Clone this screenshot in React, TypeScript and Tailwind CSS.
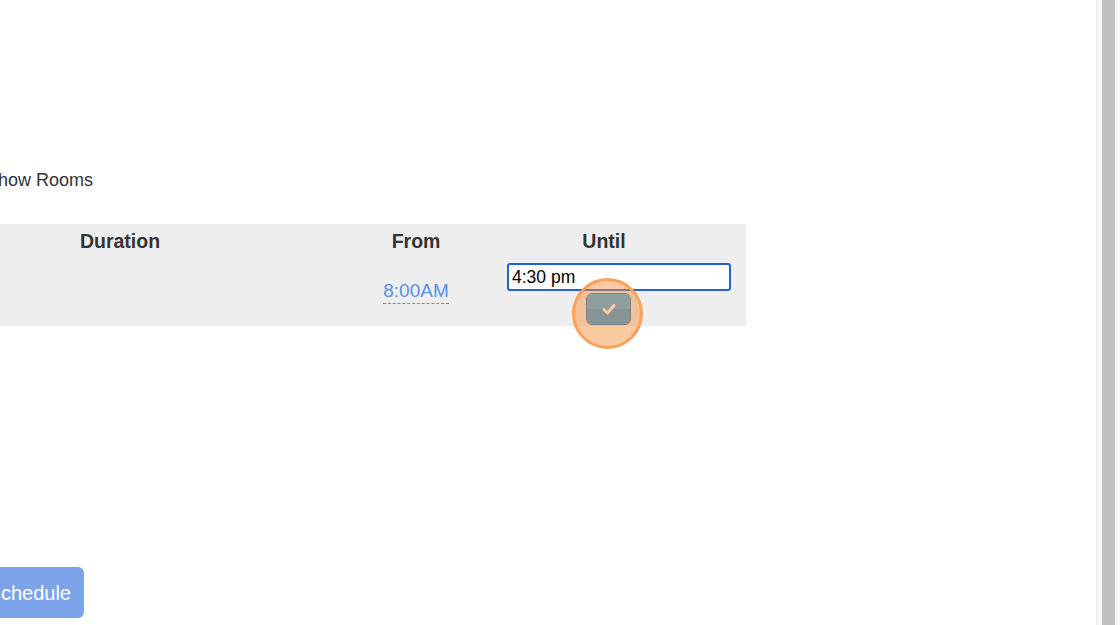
import React from 'react';

const font = { fontFamily: '"Liberation Sans", Arial, sans-serif' };

const App: React.FC = () => {
  return (
    <div className="flex h-[625px] w-[1120px] overflow-hidden bg-white" style={font}>
      <div className="relative flex w-[1096px] flex-col overflow-hidden">
        {/* checkbox label, clipped on the left */}
        <div className="mt-[168px] h-[24px] text-[18px] leading-[24px] text-[#333] -ml-[14px] whitespace-nowrap">
          Show Rooms
        </div>

        <div className="mt-[32px] w-[746px] bg-[#eeeeee] text-[#333]">
          <div className="flex h-[36px] items-center text-[19.5px] font-bold">
            <div className="w-[240px] text-center">Duration</div>
            <div className="w-[110px]" />
            <div className="w-[132px] text-center">From</div>
            <div className="w-[244px] text-center">Until</div>
          </div>
          <div className="flex h-[66px]">
            <div className="w-[350px]" />
            <div className="flex w-[132px] justify-center pt-[20px]">
              <span className="h-[24px] border-b border-dashed border-[#5b8ee6] text-[19px] leading-[22px] text-[#5b8ee6]">
                8:00AM
              </span>
            </div>
            <div className="flex flex-col pl-[25px] pt-[3px]">
              <div className="flex h-[28px] w-[224px] items-center rounded-[3px] border-2 border-[#1e63cf] bg-white px-[3px] text-[17.5px] text-black">
                4:30 pm
              </div>
              <div className="relative ml-[79px] mt-[2px] flex h-[32px] w-[45px] flex-col overflow-hidden rounded-[6px] border border-[#0f7dcf]">
                <div className="h-1/2 bg-[#3caff9]" />
                <div className="h-1/2 bg-[#2a9ce7]" />
                <svg className="absolute left-[15px] top-[9px]" width="14" height="12" viewBox="0 0 14 12">
                  <path d="M2 6.5 L5.5 10 L12 2.5" fill="none" stroke="white" strokeWidth="3" strokeLinecap="round" strokeLinejoin="round" />
                </svg>
              </div>
            </div>
          </div>
        </div>

        {/* click highlight */}
        <div className="absolute left-[572px] top-[278px] h-[71px] w-[71px] rounded-full border-[3px] border-[#fba15a] bg-[#f98a2e]/45" />

        <div className="mt-auto mb-[7px] flex h-[51px] w-[84px] items-center justify-end overflow-hidden rounded-r-[6px] bg-[#7ca3ea] pr-[13px] text-[20px] text-white">
          <span className="whitespace-nowrap">Schedule</span>
        </div>
      </div>

      {/* scrollbar */}
      <div className="flex w-[24px] border-l border-[#e6e6e6] bg-[#f8f8f8]">
        <div className="ml-[5px] h-full w-[13px] bg-[#c1c1c1]" />
      </div>
    </div>
  );
};

export default App;
